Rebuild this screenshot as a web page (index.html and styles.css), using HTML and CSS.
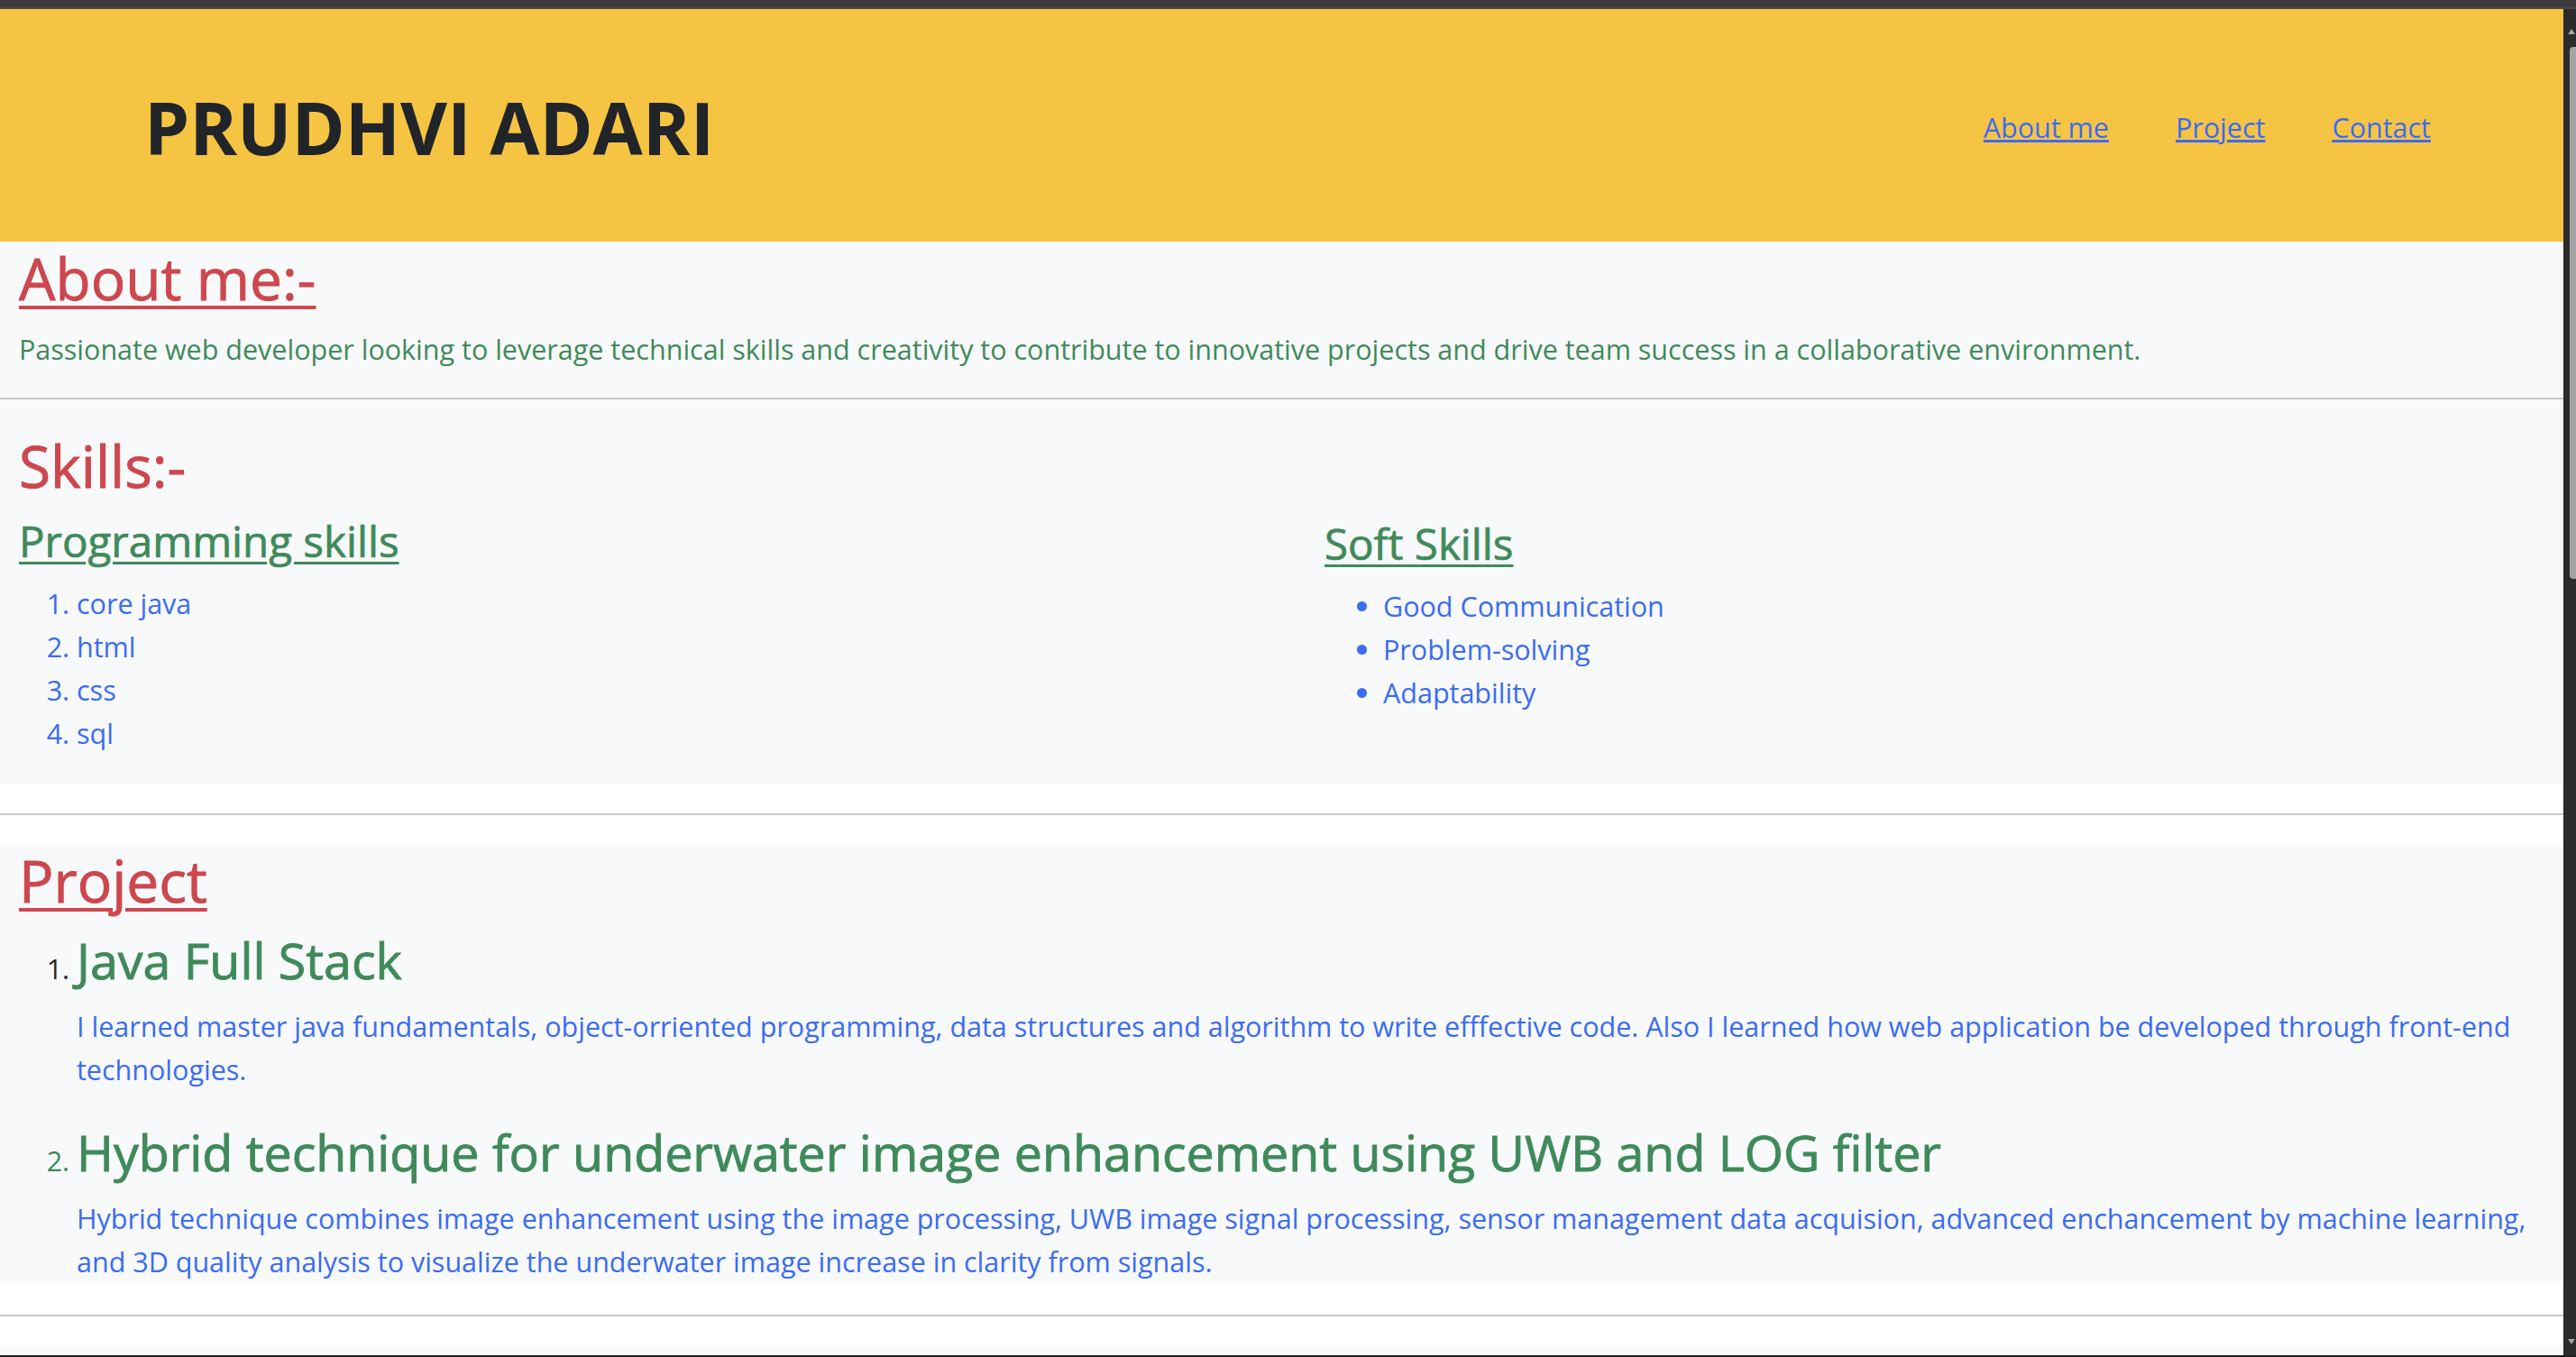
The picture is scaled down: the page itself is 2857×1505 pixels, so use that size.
FILE: index.html
```html
<!DOCTYPE html>
<html lang="en">
<head>
<meta charset="utf-8">
<title>Prudhvi Adari</title>
<link rel="stylesheet" href="styles.css">
</head>
<body>
<div class="topbar"></div>
<div class="window">
  <div class="viewport">
    <header class="site-header">
      <h1 class="brand">PRUDHVI ADARI</h1>
      <nav class="nav">
        <a href="#about" class="nav-link">About me</a>
        <a href="#project" class="nav-link">Project</a>
        <a href="#contact" class="nav-link">Contact</a>
      </nav>
    </header>

    <section class="panel about" id="about">
      <h2 class="title title-link">About me:-</h2>
      <p class="text-green">Passionate web developer looking to leverage technical skills and creativity to contribute to innovative projects and drive team success in a collaborative environment.</p>
      <hr class="rule rule-about">
    </section>

    <section class="panel skills">
      <h2 class="title">Skills:-</h2>
      <div class="skills-grid">
        <div class="skill-col">
          <h4 class="sub-title">Programming skills</h4>
          <ol class="skill-list">
            <li>core java</li>
            <li>html</li>
            <li>css</li>
            <li>sql</li>
          </ol>
        </div>
        <div class="skill-col skill-col-soft">
          <h4 class="sub-title">Soft Skills</h4>
          <ul class="skill-list bullets">
            <li>Good Communication</li>
            <li>Problem-solving</li>
            <li>Adaptability</li>
          </ul>
        </div>
      </div>
    </section>

    <hr class="rule rule-gap">

    <section class="panel project" id="project">
      <h2 class="title title-link">Project</h2>
      <ol class="project-list">
        <li class="project-item">
          <h3 class="project-name">Java Full Stack</h3>
          <p class="project-desc">I learned master java fundamentals, object-orriented programming, data structures and algorithm to write efffective code. Also I learned how web application be developed through front-end technologies.</p>
        </li>
        <li class="project-item project-item-green">
          <h3 class="project-name">Hybrid technique for underwater image enhancement using UWB and LOG filter</h3>
          <p class="project-desc last">Hybrid technique combines image enhancement using the image processing, UWB image signal processing, sensor management data acquision, advanced enchancement by machine learning, and 3D quality analysis to visualize the underwater image increase in clarity from signals.</p>
        </li>
      </ol>
    </section>

    <hr class="rule rule-gap2">

    <section class="panel contact" id="contact"></section>
  </div>
  <div class="scrollbar">
    <span class="sb-arrow sb-up"></span>
    <span class="sb-thumb"></span>
    <span class="sb-arrow sb-down"></span>
  </div>
</div>
</body>
</html>
```
FILE: styles.css
```css
html, body {
  margin: 0;
  padding: 0;
}
body {
  height: 1505px;
  overflow: hidden;
  display: flex;
  flex-direction: column;
  background: #2b2b2b;
  font-family: "Open Sans", "Noto Sans", sans-serif;
  font-size: 30.5px;
  line-height: 48px;
  color: #212529;
}
.topbar {
  height: 8px;
  flex: none;
  background: #3c3c3c;
  border-bottom: 2px solid #474747;
}
.window {
  flex: 1;
  display: flex;
  min-height: 0;
  border-bottom: 2px solid #1f1f1f;
}
.viewport {
  flex: 1;
  min-width: 0;
  overflow: hidden;
  background: #ffffff;
}

/* header */
.site-header {
  height: 258px;
  box-sizing: border-box;
  padding: 4px 147px 0 160px;
  background: #f6c443;
  display: flex;
  align-items: center;
  justify-content: space-between;
}
.brand {
  margin: 0;
  font-size: 80px;
  line-height: 96px;
  font-weight: 700;
  color: #212529;
}
.nav {
  display: flex;
  gap: 74px;
}
.nav-link {
  color: #3a6cf4;
  text-decoration: underline;
  font-size: 30.5px;
  line-height: 48px;
}

/* sections */
.panel {
  background: #f8f9fa;
  padding: 0 21px;
  display: flow-root;
}
.about {
  padding-top: 2px;
}
.title {
  margin: 0 0 16px;
  font-size: 64px;
  line-height: 77px;
  font-weight: 400;
  color: #cd474e;
  -webkit-text-stroke: 0.9px #cd474e;
}
.title-link {
  text-decoration: underline;
  text-decoration-thickness: 4px;
  text-underline-offset: 6px;
}
.text-green {
  color: #3f8a5a;
  margin: 0 0 30px;
}
.rule {
  border: 0;
  border-top: 2px solid #c5c6c8;
  margin: 0;
  height: 0;
}
.rule-about {
  margin: 0 -21px 35px;
}
.rule-gap {
  margin: 32px 0;
}
.rule-gap2 {
  margin: 34px 0 32px;
}

/* skills */
.skills-grid {
  display: grid;
  grid-template-columns: 1fr 1fr;
  column-gap: 95px;
}
.skill-col-soft {
  padding-top: 3px;
}
.sub-title {
  margin: 0 0 16px;
  font-size: 47.5px;
  line-height: 58px;
  font-weight: 400;
  color: #3f8a5a;
  -webkit-text-stroke: 0.7px #3f8a5a;
  text-decoration: underline;
  text-decoration-thickness: 3px;
  text-underline-offset: 5px;
}
.skill-list {
  margin: 0 0 33px;
  padding-left: 64px;
  color: #3a6cf4;
}
.bullets {
  padding-left: 65px;
  list-style: disc;
}

/* project */
.project {
  padding-top: 2px;
  padding-bottom: 1px;
}
.project-list {
  margin: 0;
  padding-left: 64px;
}
.project-item {
  color: #212529;
}
.project-item-green {
  color: #3f8a5a;
}
.project-name {
  margin: 0 0 16px;
  font-size: 55.5px;
  line-height: 67px;
  font-weight: 400;
  color: #3f8a5a;
  -webkit-text-stroke: 0.9px #3f8a5a;
}
.project-desc {
  margin: 0 0 34px;
  color: #3a6cf4;
}
.project-desc.last {
  margin-bottom: 0;
}
.contact {
  height: 200px;
}

/* scrollbar */
.scrollbar {
  width: 14px;
  flex: none;
  background: #2b2b2b;
  position: relative;
}
.sb-thumb {
  position: absolute;
  left: 7px;
  right: 0;
  top: 42px;
  height: 590px;
  background: #a3a3a3;
  border-radius: 4px 0 0 4px;
}
.sb-arrow {
  position: absolute;
  left: 5px;
  width: 0;
  height: 0;
  border-left: 4px solid transparent;
  border-right: 4px solid transparent;
}
.sb-up {
  top: 22px;
  border-bottom: 6px solid #a3a3a3;
}
.sb-down {
  bottom: 12px;
  border-top: 6px solid #a3a3a3;
}
```
